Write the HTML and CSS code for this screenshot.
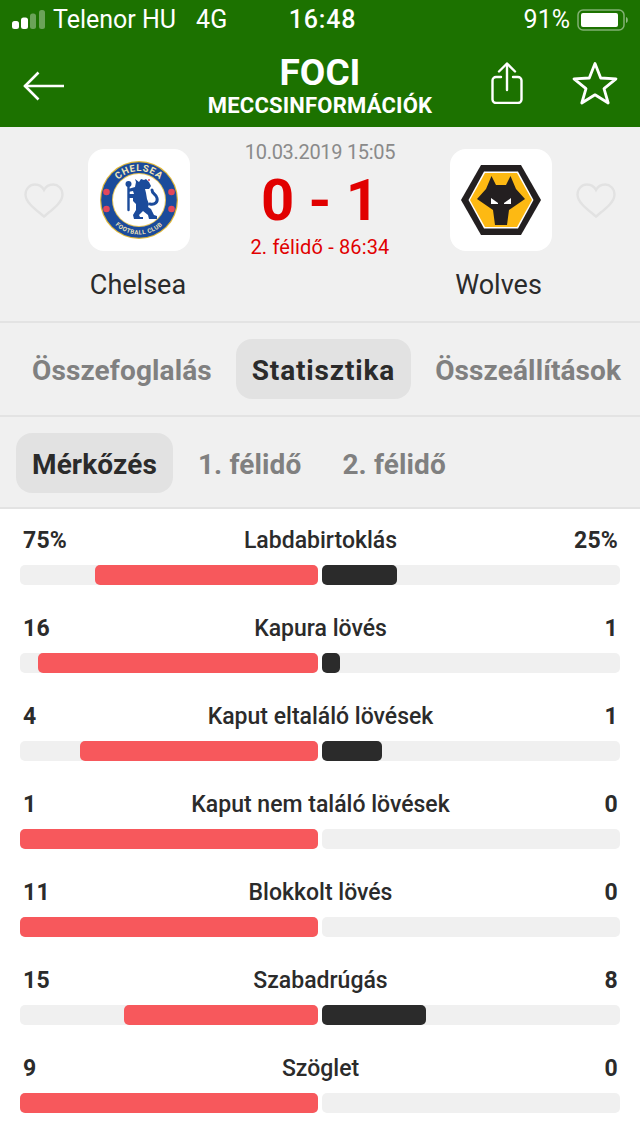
FILE: index.html
```html
<!DOCTYPE html>
<html lang="hu">
<head>
<meta charset="utf-8">
<title>Foci</title>
<link rel="stylesheet" href="styles.css">
</head>
<body>
<header class="top">
  <div class="status">
    <div class="status-left">
      <svg class="signal" width="33" height="20" viewBox="0 0 33 20"><rect x="0" y="11" width="7" height="8" rx="2.500" fill="#fff"/><rect x="9" y="7.500" width="7" height="11.500" rx="2.500" fill="#fff"/><rect x="18" y="3.500" width="6" height="15.500" rx="2.500" fill="#fff" opacity=".35"/><rect x="27" y="0" width="6" height="19" rx="2.500" fill="#fff" opacity=".35"/></svg>
      <span class="carrier">Telenor HU</span>
      <span class="net">4G</span>
    </div>
    <div class="clock">16:48</div>
    <div class="status-right">
      <span class="pct">91%</span>
      <svg class="battery" width="51" height="22" viewBox="0 0 51 22"><rect x="1" y="1" width="46" height="20" rx="5" fill="none" stroke="#fff" stroke-opacity=".45" stroke-width="1.500"/><rect x="4" y="4" width="37" height="14" rx="2" fill="#fff"/><path d="M49 8c1.300.4 1.800 1.500 1.800 3s-.5 2.600-1.800 3z" fill="#fff" fill-opacity=".5"/></svg>
    </div>
  </div>
  <nav class="nav">
    <div class="nav-left">
      <svg width="42" height="30" viewBox="0 0 42 30" fill="none" stroke="#fff" stroke-width="2.600"><path d="M1.500 15H41"/><path d="M15.500 1.500 2 15l13.500 13.500"/></svg>
    </div>
    <div class="nav-title">
      <div class="title">FOCI</div>
      <div class="subtitle">MECCSINFORMÁCIÓK</div>
    </div>
    <div class="nav-right">
      <svg width="32" height="42" viewBox="0 0 32 42" fill="none" stroke="#fff" stroke-width="2.400" stroke-linecap="round" stroke-linejoin="round"><path d="M16 28V2"/><path d="M8 9.500 16 1.500l8 8"/><path d="M10 15H5a3.500 3.500 0 0 0-3.500 3.500v19A3.500 3.500 0 0 0 5 41h22a3.500 3.500 0 0 0 3.500-3.500v-19A3.500 3.500 0 0 0 27 15h-5"/></svg>
      <svg width="46" height="44" viewBox="0 0 46 44" fill="none" stroke="#fff" stroke-width="2.800" stroke-linejoin="round"><path d="M23 2.500 28.700 17 44 17.800 32 27.600 36.200 42 23 33.800 9.800 42 14 27.600 2 17.800 17.300 17z"/></svg>
    </div>
  </nav>
</header>

<section class="match">
  <div class="side">
    <svg class="heart" width="40" height="36" viewBox="0 0 40 36" fill="none" stroke="#e2e2e2" stroke-width="2.400"><path d="M20 33.500C13 27.500 1.500 20 1.500 11.500 1.500 5.500 6 1.500 11 1.500c4 0 7.200 2 9 5.500 1.800-3.500 5-5.500 9-5.500 5 0 9.500 4 9.500 10 0 8.500-11.500 16-18.500 22z"/></svg>
    <div class="team">
      <div class="logo">
        <svg width="80" height="80" viewBox="0 0 80 80">
          <defs>
            <path id="arcTop" d="M11 40a29 29 0 0 1 58 0"/>
            <path id="arcBot" d="M5.500 40a34.500 34.500 0 0 0 69 0"/>
          </defs>
          <circle cx="40" cy="40" r="39" fill="#e0b83a"/>
          <circle cx="40" cy="40" r="37.800" fill="#1b4b9b"/>
          <circle cx="40" cy="40" r="27" fill="#e8c65a"/>
          <circle cx="40" cy="40" r="26" fill="#fff"/>
          <text class="crest-top"><textPath href="#arcTop" startOffset="50%" text-anchor="middle">CHELSEA</textPath></text>
          <text class="crest-bot"><textPath href="#arcBot" startOffset="50%" text-anchor="middle">FOOTBALL CLUB</textPath></text>
          <circle cx="7.500" cy="32" r="3.300" fill="#e2475b"/><circle cx="72.500" cy="32" r="3.300" fill="#e2475b"/>
          <circle cx="7.500" cy="49" r="3.300" fill="#e2475b"/><circle cx="72.500" cy="49" r="3.300" fill="#e2475b"/>
          <g class="lion">
            <circle cx="29.500" cy="24" r="3"/>
            <path class="lion-line thin" d="M29.500 26V50"/>
            <path class="lion-fill" d="M40 22l2-3 3 1 2-1 3 3 2 4-2 3h-4l1 4 1 6 2 5-1 3 3 2 3 6 3 1 0 3h-8l-1-4-5-4-4 4 1 2h3v2h-9l-1-4 3-5v-6l-3-3v-3h-5v-4h6l-1-3-5 1v-3l7-2 1-5-1-3z"/>
            <path class="lion-line" d="M51 44c5 1 8-2 7-6s-5-4-5-8"/>
          </g>
          <circle cx="50" cy="20" r="1" fill="#e2475b"/>
        </svg>
      </div>
      <div class="team-name">Chelsea</div>
    </div>
  </div>

  <div class="score-box">
    <div class="date">10.03.2019 15:05</div>
    <div class="score">0 - 1</div>
    <div class="period">2. félidő - 86:34</div>
  </div>

  <div class="side side-right">
    <div class="team">
      <div class="logo">
        <svg width="80" height="70" viewBox="0 0 80 70">
          <path d="M20 0H60L80 35 60 70H20L0 35z" fill="#231f20"/>
          <path d="M23 6.500H57L72.500 35 57 63.500H23L7.500 35z" fill="#fff"/>
          <path d="M24 8H56L71 35 56 62H24L9 35z" fill="#fdb913"/>
          <path d="M30.500 11 35 20H45L49.500 11 55 24 64 34 48 45 46 60H34L32 45 16 34 25 24z" fill="#231f20"/>
          <path d="M30 33l7 5v1l-7 0z" fill="#fff"/>
          <path d="M50 33l-7 5v1l7 0z" fill="#fff"/>
        </svg>
      </div>
      <div class="team-name">Wolves</div>
    </div>
    <svg class="heart" width="40" height="36" viewBox="0 0 40 36" fill="none" stroke="#e2e2e2" stroke-width="2.400"><path d="M20 33.500C13 27.500 1.500 20 1.500 11.500 1.500 5.500 6 1.500 11 1.500c4 0 7.200 2 9 5.500 1.800-3.500 5-5.500 9-5.500 5 0 9.500 4 9.500 10 0 8.500-11.500 16-18.500 22z"/></svg>
  </div>
</section>

<div class="tabs tabs-main">
  <div class="tab">Összefoglalás</div>
  <div class="tab active wide">Statisztika</div>
  <div class="tab">Összeállítások</div>
</div>
<div class="tabs tabs-sub">
  <div class="tab active">Mérkőzés</div>
  <div class="tab">1. félidő</div>
  <div class="tab">2. félidő</div>
</div>

<section class="stats">
  <div class="stat">
    <div class="stat-head"><b>75%</b><span>Labdabirtoklás</span><b>25%</b></div>
    <div class="bars"><div class="track left"><div class="fill red" style="width:75%"></div></div><div class="track"><div class="fill dark" style="width:25%"></div></div></div>
  </div>
  <div class="stat">
    <div class="stat-head"><b>16</b><span>Kapura lövés</span><b>1</b></div>
    <div class="bars"><div class="track left"><div class="fill red" style="width:94.1%"></div></div><div class="track"><div class="fill dark" style="width:5.900%"></div></div></div>
  </div>
  <div class="stat">
    <div class="stat-head"><b>4</b><span>Kaput eltaláló lövések</span><b>1</b></div>
    <div class="bars"><div class="track left"><div class="fill red" style="width:80%"></div></div><div class="track"><div class="fill dark" style="width:20%"></div></div></div>
  </div>
  <div class="stat">
    <div class="stat-head"><b>1</b><span>Kaput nem találó lövések</span><b>0</b></div>
    <div class="bars"><div class="track left"><div class="fill red" style="width:100%"></div></div><div class="track"></div></div>
  </div>
  <div class="stat">
    <div class="stat-head"><b>11</b><span>Blokkolt lövés</span><b>0</b></div>
    <div class="bars"><div class="track left"><div class="fill red" style="width:100%"></div></div><div class="track"></div></div>
  </div>
  <div class="stat">
    <div class="stat-head"><b>15</b><span>Szabadrúgás</span><b>8</b></div>
    <div class="bars"><div class="track left"><div class="fill red" style="width:65.200%"></div></div><div class="track"><div class="fill dark" style="width:34.800%"></div></div></div>
  </div>
  <div class="stat">
    <div class="stat-head"><b>9</b><span>Szöglet</span><b>0</b></div>
    <div class="bars"><div class="track left"><div class="fill red" style="width:100%"></div></div><div class="track"></div></div>
  </div>
</section>
</body>
</html>
```
FILE: styles.css
```css
* { box-sizing: border-box; }
html, body { margin: 0; padding: 0; }
body {
  width: 640px;
  height: 1135px;
  overflow: hidden;
  background: #fff;
  color: #2b2b2b;
  font-family: Roboto, "Liberation Sans", sans-serif;
}

/* header */
.top { background: #1c7200; color: #fff; height: 127px; }
.status {
  height: 40px;
  display: grid;
  grid-template-columns: 1fr auto 1fr;
  align-items: center;
  padding: 0 12px 0 12px;
  font-size: 25px;
  line-height: 40px;
}
.status-left { display: flex; align-items: center; }
.signal { margin-right: 8px; }
.carrier { margin-right: 20px; }
.clock { font-weight: 500; letter-spacing: .8px; padding-left: 5px; }
.status-right { display: flex; align-items: center; justify-content: flex-end; gap: 7px; }
.nav {
  height: 87px;
  display: grid;
  grid-template-columns: 1fr auto 1fr;
  align-items: center;
  padding: 0 22px;
}
.nav-left { display: flex; align-items: center; padding: 5px 0 0 1px; }
.nav-title { text-align: center; }
.title { font-size: 37px; line-height: 40px; font-weight: 700; margin-top: 4px; }
.subtitle { font-size: 22px; line-height: 26px; font-weight: 700; letter-spacing: .2px; }
.nav-right { display: flex; justify-content: flex-end; align-items: center; gap: 49px; margin-top: -2px; }

/* match */
.match {
  height: 194px;
  background: #f0f0f0;
  display: flex;
  justify-content: space-between;
  padding: 22px 24px 0;
}
.side { display: flex; align-items: flex-start; }
.heart { margin-top: 34px; }
.side .team { margin-left: 24px; }
.side-right .team { margin-left: 0; margin-right: 24px; }
.team { width: 102px; display: flex; flex-direction: column; align-items: center; }
.logo {
  width: 102px;
  height: 102px;
  border-radius: 16px;
  background: #fff;
  display: flex;
  align-items: center;
  justify-content: center;
}
.team-name { font-size: 27px; line-height: 34px; margin-top: 17px; white-space: nowrap; padding-right: 2px; }
.side-right .team-name { padding-right: 5px; }
.crest-top { font: 700 9.500px Roboto, sans-serif; fill: #f2e6b8; letter-spacing: .8px; }
.crest-bot { font: 700 6px Roboto, sans-serif; fill: #f2e6b8; letter-spacing: .5px; }
.lion { fill: #1b4b9b; }
.lion-line { fill: none; stroke: #1b4b9b; stroke-width: 3; stroke-linecap: round; }
.lion-line.thin { stroke-width: 2.400; }
.score-box { text-align: center; margin-top: -10px; }
.date { font-size: 20px; line-height: 26px; color: #8a8a8a; letter-spacing: -.3px; }
.score { font-size: 58px; line-height: 64px; font-weight: 700; color: #e10000; margin-top: 3px; white-space: pre; }
.period { font-size: 20px; line-height: 26px; color: #e10000; margin-top: 2px; letter-spacing: .15px; }

/* tabs */
.tabs {
  display: flex;
  gap: 8px;
  padding: 16px;
  background: #f0f0f0;
  border-top: 2px solid #e3e3e3;
  height: 94px;
}
.tabs-sub { gap: 9px; border-bottom: 2px solid #e3e3e3; }
.tab {
  height: 60px;
  padding: 2px 16px 0;
  line-height: 60px;
  border-radius: 16px;
  font-size: 28px;
  font-weight: 700;
  letter-spacing: .12px;
  color: #808080;
  white-space: nowrap;
}
.tab.active { background: #e2e2e2; color: #2b2b2b; }
.tab.wide { letter-spacing: .85px; }

/* stats */
.stats { padding: 17px 20px 0; }
.stat { height: 88px; }
.stat-head {
  display: grid;
  grid-template-columns: 1fr auto 1fr;
  align-items: center;
  height: 28px;
  padding: 0 2px 0 3px;
  font-size: 23px;
  font-weight: 500;
  margin-bottom: 11px;
}
.stat-head b { font-weight: 700; letter-spacing: .2px; }
.stat-head b:last-child { text-align: right; }
.bars { display: flex; gap: 4px; height: 20px; }
.track { flex: 1; background: #f0f0f0; border-radius: 5px; display: flex; }
.track.left { justify-content: flex-end; }
.fill { height: 20px; border-radius: 5px; }
.red { background: #f7585c; }
.dark { background: #2b2b2b; }
```
